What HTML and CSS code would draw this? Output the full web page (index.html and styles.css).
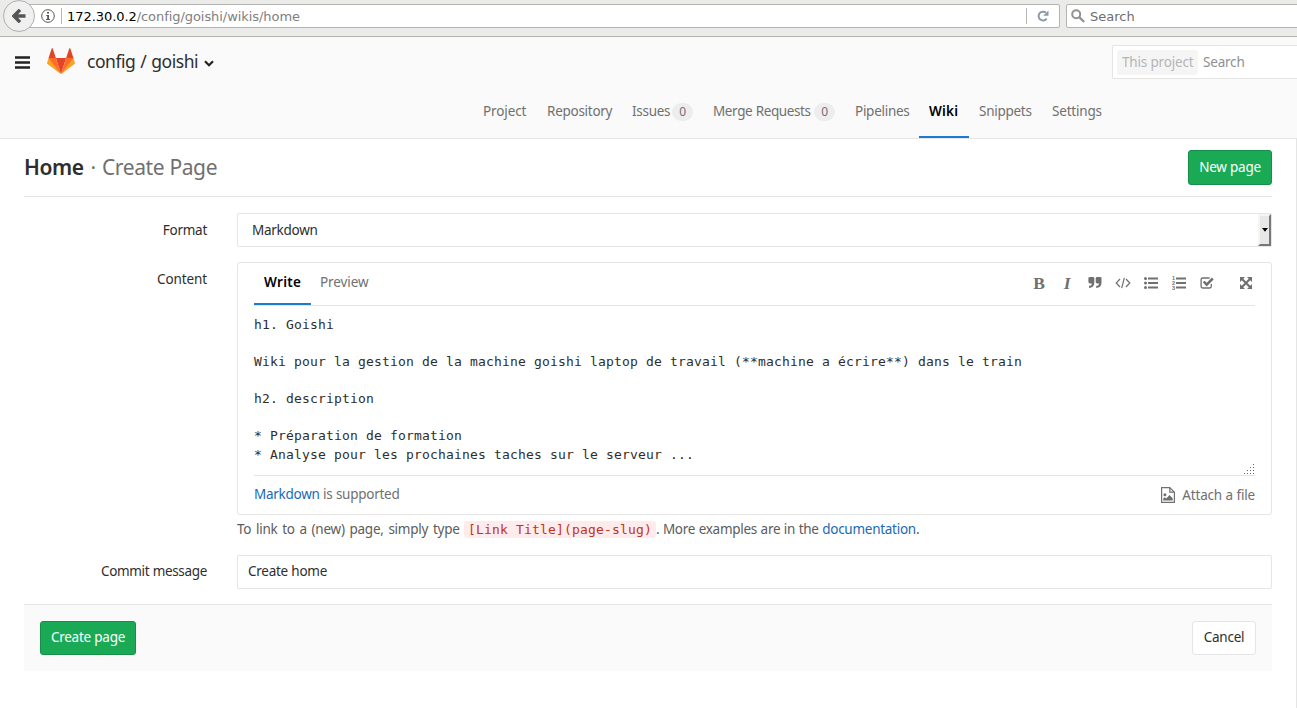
FILE: index.html
```html
<!DOCTYPE html>
<html lang="en">
<head>
<meta charset="utf-8">
<title>Create Page · Wiki · config / goishi</title>
<link rel="stylesheet" href="styles.css">
</head>
<body>
<div class="browser">
  <div class="urlbar">
    <svg class="info" viewBox="0 0 14 14"><circle cx="7" cy="7" r="6.3" fill="none" stroke="#555"/><path d="M6 3h2v1.600H6zM5.300 6H8v4h1v1H5v-1h1.200V7h-.9z" fill="#555"/></svg>
    <span class="bar"></span>
    <span class="url"><b>172.30.0.2</b>/config/goishi/wikis/home</span>
    <span class="bar"></span>
    <svg class="reload" viewBox="0 0 12 12"><path d="M9.600 8.600A4.400 4.400 0 1 1 9 2.800" fill="none" stroke="#8b9aaa" stroke-width="2"/><path d="M11.500.5v5.300H6.200z" fill="#8b9aaa"/></svg>
  </div>
  <div class="websearch">
    <svg class="glass" viewBox="0 0 14 14"><circle cx="5.200" cy="5.200" r="4" fill="none" stroke="#929292" stroke-width="2"/><path d="M8.200 8.200l5 4.800" stroke="#929292" stroke-width="2.300"/></svg>
    <span>Search</span>
  </div>
  <div class="back"><svg viewBox="0 0 14 14"><path d="M8 .8L2 7l6 6.200M2 7h11.500" fill="none" stroke="#555" stroke-width="3.400"/></svg></div>
</div>
<header class="header">
  <div class="top">
    <svg class="burger" viewBox="0 0 15 13"><path d="M0 1.500h15M0 6.500h15M0 11.500h15" stroke="#222" stroke-width="2.600"/></svg>
    <svg class="logo" viewBox="0 1 36 33.500"><path fill="#e24329" d="M2 14l9.380 9v-9l-4-12.280c-.205-.632-1.176-.632-1.380 0zM34 14l-9.380 9v-9l4-12.280c.205-.632 1.176-.632 1.380 0zM18 34.380L11.380 14h13.240z"/><path fill="#fc6d26" d="M18 34.380L11.380 14H2l4 11zM18 34.380L24.620 14H34l-4 11z"/><path fill="#fca326" d="M2 14L.1 20.160c-.18.565 0 1.200.5 1.560L18 34.380zM34 14l1.900 6.160c.18.565 0 1.200-.5 1.560L18 34.380z"/></svg>
    <div class="title">config / goishi</div>
    <svg class="chev" viewBox="0 0 10 7"><path d="M1 1.200l4 4 4-4" fill="none" stroke="#222" stroke-width="2.200"/></svg>
    <div class="search"><span class="scope">This project</span><span class="hint">Search</span></div>
  </div>
  <nav class="nav">
    <a class="project">Project</a><a class="repository">Repository</a><a class="issues">Issues<i>0</i></a><a class="merge">Merge Requests<i>0</i></a><a class="pipelines">Pipelines</a><a class="wiki">Wiki</a><a class="snippets">Snippets</a><a class="settings">Settings</a>
  </nav>
</header>
<main class="page">
  <div class="heading">
    <h1><b>Home</b><span class="dot">·</span><span class="sub">Create Page</span></h1>
    <div class="btn green new">New page</div>
  </div>
  <div class="row format">
    <label>Format</label>
    <div class="field select"><span>Markdown</span><span class="drop"><svg viewBox="0 0 6 4"><path d="M0 0h6L3 3.700z"/></svg></span></div>
  </div>
  <div class="row content">
    <label>Content</label>
    <div class="editor">
      <div class="tabs">
        <div class="tab active">Write</div><div class="tab">Preview</div>
        <div class="tools">
          <span class="letter">B</span>
          <span class="letter italic">I</span>
          <svg viewBox="0 0 14 14"><path d="M2 1h3q1.300 0 1.300 1.300V6.500q0 5.300-5.300 5.500V9.700q2.800 0 2.800-2.300H2Q.4 7.400.4 6V2.300Q.4 1 2 1zM9.200 1h3q1.300 0 1.300 1.300V6.500q0 5.300-5.300 5.500V9.700q2.800 0 2.800-2.300H9.200q-1.500 0-1.500-1.400V2.300Q7.700 1 9.200 1z" fill="#707070"/></svg>
          <svg class="wide" viewBox="0 0 16 14"><path d="M5 3L1.200 7 5 11M11 3l3.800 4L11 11M9.300 1.800L6.700 12.200" fill="none" stroke="#707070" stroke-width="1.200"/></svg>
          <svg viewBox="0 0 14 14"><path d="M4 2.500H14M4 7H14M4 11.500H14" stroke="#707070" stroke-width="2"/><circle cx="1.500" cy="2.500" r="1.500" fill="#707070"/><circle cx="1.500" cy="7" r="1.500" fill="#707070"/><circle cx="1.500" cy="11.500" r="1.500" fill="#707070"/></svg>
          <svg class="ordered" viewBox="0 0 14 14"><path d="M4 2.500H14M4 7H14M4 11.500H14" stroke="#707070" stroke-width="2"/><g class="digits"><text x="0" y="4">1</text><text x="0" y="9">2</text><text x="0" y="14.300">3</text></g></svg>
          <svg viewBox="0 0 14 14"><path d="M11.300 8v2.300q0 1.700-1.700 1.700H2.800Q1.100 12 1.100 10.300V3.700Q1.100 2 2.800 2h6.800" fill="none" stroke="#707070" stroke-width="1.300"/><path d="M3.700 5.500l3 3.200L12.800 2.500" fill="none" stroke="#707070" stroke-width="2.500"/></svg>
          <svg class="full" viewBox="0 0 14 14"><path d="M1 1h5L1 6zM13 1v5L8 1zM1 13V8l5 5zM13 13H8l5-5z" fill="#707070"/><path d="M3 3l8 8M11 3l-8 8" stroke="#707070" stroke-width="2.100"/></svg>
        </div>
      </div>
      <div class="area"><pre>h1. Goishi

Wiki pour la gestion de la machine goishi laptop de travail (**machine a écrire**) dans le train

h2. description

* Préparation de formation
* Analyse pour les prochaines taches sur le serveur ...</pre>
        <svg class="grip" viewBox="0 0 11 11"><path d="M9 .5h1M9 3.500h1M6 3.500h1M9 6.500h1M6 6.500h1M3 6.500h1M9 9.500h1M6 9.500h1M3 9.500h1M0 9.500h1" stroke="#666"/></svg>
      </div>
      <div class="foot">
        <span class="md"><a>Markdown</a> is supported</span>
        <span class="attach"><svg viewBox="0 0 14 16"><path d="M.6.600h8.200l4.600 4.600v10.200H.6zM8.800.600v4.600h4.600" fill="none" stroke="#707070" stroke-width="1.200"/><circle cx="3.900" cy="7.800" r="1.500" fill="#707070"/><path d="M2.200 13.500v-2l1.600-1.300L5.200 11.500 8.500 8l3.200 3.300v2.200z" fill="#707070"/></svg><span>Attach a file</span></span>
      </div>
    </div>
  </div>
  <div class="help"><span class="lead">To link to a (new) page, simply type</span><code>[Link Title](page-slug)</code><span class="more">. More examples are in the <a>documentation</a>.</span></div>
  <div class="row commit">
    <label>Commit message</label>
    <div class="field">Create home</div>
  </div>
  <div class="actions">
    <div class="btn green create">Create page</div>
    <div class="btn cancel">Cancel</div>
  </div>
</main>
</body>
</html>
```
FILE: styles.css
```css
* { box-sizing: border-box; }
body { margin: 0; height: 708px; overflow: hidden; background: #fff; color: #2e2e2e; font: 13.5px/20px "Noto Sans", sans-serif; letter-spacing: -.27px; word-spacing: .2px; display: flex; flex-direction: column; white-space: nowrap; }
svg { display: block; flex: none; }
a { color: #1b69b6; }

.browser { position: relative; height: 37px; flex: none; background: #ebebea; border-bottom: 1px solid #b2b2b0; padding: 4px 0 0 19px; display: flex; gap: 6px; font: 13px/22px "DejaVu Sans", sans-serif; letter-spacing: 0; color: #6e6e6e; }
.urlbar { flex: none; width: 1041px; height: 24px; background: #fff; border: 1px solid #b4b4b2; border-radius: 2px; display: flex; align-items: center; padding-left: 21px; }
.info { width: 14px; height: 14px; }
.bar { width: 1px; height: 16px; background: #b6b6b6; margin-left: 6px; }
.url { margin: 2px 0 0 5px; color: #808080; width: 953px; letter-spacing: -.06px; }
.url b { color: #000; font-weight: normal; }
.reload { width: 12px; height: 12px; margin-left: 10px; }
.websearch { flex: none; width: 240px; height: 24px; background: #fff; border: 1px solid #b4b4b2; border-radius: 2px; display: flex; align-items: center; padding-left: 4px; gap: 5px; }
.websearch span { margin-top: 2px; }
.glass { width: 14px; height: 14px; }
.back { position: absolute; left: 3px; top: 0; width: 32px; height: 32px; border-radius: 50%; background: #f0f0f0; border: 1px solid #b0b0ae; display: flex; align-items: center; justify-content: center; }
.back svg { width: 14px; height: 14px; }

.header { height: 102px; flex: none; background: #fafafa; border-bottom: 1px solid #e5e5e5; }
.top { height: 50px; display: flex; align-items: center; padding-left: 15px; }
.burger { width: 15px; height: 13px; }
.logo { width: 28px; height: 26px; margin: -3px 0 0 17px; }
.title { width: 112px; margin: -2px 0 0 12px; font-size: 17.5px; letter-spacing: -.45px; word-spacing: .8px; }
.chev { width: 10px; height: 7px; margin: 3px 0 0 5px; }
.search { margin-left: auto; width: 185px; height: 34px; border: 1px solid #e5e5e5; border-right: 0; border-radius: 2px 0 0 2px; background: #fff; display: flex; align-items: center; padding-left: 4px; color: #8f8f8f; }
.scope { width: 81px; height: 25px; line-height: 25px; padding-left: 5px; background: #f5f5f5; color: #b5b5b5; border-radius: 3px; letter-spacing: -.2px; }
.hint { margin-left: 5px; letter-spacing: -.2px; }

.nav { height: 51px; padding-left: 473px; display: flex; color: #707070; }
.nav a { color: inherit; padding: 0 10px 3px; height: 51px; display: flex; align-items: center; }
.nav i { font-style: normal; font-size: 12px; line-height: 18px; width: 21px; height: 18px; background: #ededed; border-radius: 9px; text-align: center; margin: 2px 0 0 auto; }
.nav .project { width: 64px; letter-spacing: -.1px; }
.nav .repository { width: 85px; }
.nav .issues { width: 81px; }
.nav .merge { width: 142px; letter-spacing: -.38px; }
.nav .pipelines { width: 74px; }
.nav .wiki { width: 50px; color: #000; font-weight: 600; letter-spacing: .2px; padding-bottom: 1px; border-bottom: 2px solid #1f78d1; }
.nav .snippets { width: 73px; }
.nav .settings { width: 70px; letter-spacing: -.2px; }

.page { flex: 1; padding: 0 24px; border-right: 1px solid #e5e5e5; }
.heading { height: 58px; border-bottom: 1px solid #e5e5e5; display: flex; align-items: center; justify-content: space-between; }
h1 { margin: -1px 0 0; font-size: 21px; font-weight: normal; letter-spacing: -.4px; line-height: 30px; display: flex; }
h1 b { width: 60px; font-weight: 600; }
.dot { width: 18px; text-align: center; color: #707070; }
.sub { color: #707070; }
.btn { height: 34px; line-height: 31px; border: 1px solid #e5e5e5; border-radius: 3px; background: #fff; text-align: center; }
.green { color: #fff; background: #1aaa55; border-color: #168f48; }
.new { width: 84px; height: 35px; line-height: 33px; }

.row { display: flex; }
.row label { width: 183px; margin-right: 30px; text-align: right; line-height: 34px; }
.format { margin-top: 16px; }
.field { width: 1035px; height: 34px; border: 1px solid #e5e5e5; border-radius: 2px; line-height: 32px; padding-left: 10px; }
.select { display: flex; justify-content: space-between; padding-left: 14px; }
.drop { width: 13px; height: 32px; background: #e8e8e7; border: 2px solid; border-color: #f5f5f4 #777 #777 #f5f5f4; display: flex; align-items: center; justify-content: center; }
.drop svg { width: 6px; height: 4px; }
.content { margin-top: 15px; }
.content label { letter-spacing: -.1px; }
.editor { width: 1035px; height: 253px; border: 1px solid #e5e5e5; border-radius: 3px; padding: 0 16px; }
.tabs { height: 43px; border-bottom: 1px solid #e5e5e5; display: flex; line-height: 39px; color: #707070; }
.tab { width: 57px; height: 42px; padding-left: 9px; letter-spacing: -.1px; }
.tab.active { padding-left: 10px; color: #000; font-weight: 600; letter-spacing: .3px; border-bottom: 2px solid #1f78d1; }
.tools { margin-left: auto; display: flex; align-items: center; gap: 14px; height: 40px; }
.tools svg { width: 14px; height: 14px; }
.tools .wide { width: 16px; margin: 0 -1px; }
.tools .ordered { overflow: visible; }
.tools .full { margin-left: 11px; width: 14px; height: 14px; margin-right: 2px; }
.letter { width: 14px; text-align: center; font: bold 17.5px/20px "Liberation Serif", serif; color: #707070; }
.italic { font-style: italic; }
.digits { font: bold 5.5px "Liberation Sans", sans-serif; fill: #707070; }
.area { position: relative; height: 170px; border-bottom: 1px solid #e5e5e5; padding-top: 10px; }
pre { margin: 0; font: 13px/18.57px "DejaVu Sans Mono", monospace; letter-spacing: .174px; word-spacing: 0; }
.grip { position: absolute; right: 0; bottom: 0; width: 11px; height: 11px; }
.foot { height: 38px; display: flex; justify-content: space-between; align-items: center; color: #707070; }
.md { margin-top: -2px; }
.attach { display: flex; align-items: center; gap: 7px; letter-spacing: -.18px; }
.attach svg { width: 14px; height: 16px; }
.help { margin-left: 213px; height: 30px; line-height: 28px; display: flex; align-items: center; color: #5c5c5c; }
.help span { margin-top: -2px; }
.help .lead { width: 227px; letter-spacing: -.23px; word-spacing: 1.4px; }
.help .more { word-spacing: .3px; }
code { font: 13px/17px "DejaVu Sans Mono", monospace; letter-spacing: .174px; word-spacing: 0; color: #c0341d; background: #fdeceb; border-radius: 3px; padding: 0 4px; width: 192px; margin-top: -1px; }
.commit { margin-top: 10px; }
.commit label { line-height: 32px; letter-spacing: -.33px; }
.commit .field { line-height: 30px; }
.actions { margin-top: 15px; height: 67px; background: #fafafa; border-top: 1px solid #e5e5e5; padding: 16px; display: flex; justify-content: space-between; }
.create { width: 96px; }
.cancel { width: 64px; }
```
